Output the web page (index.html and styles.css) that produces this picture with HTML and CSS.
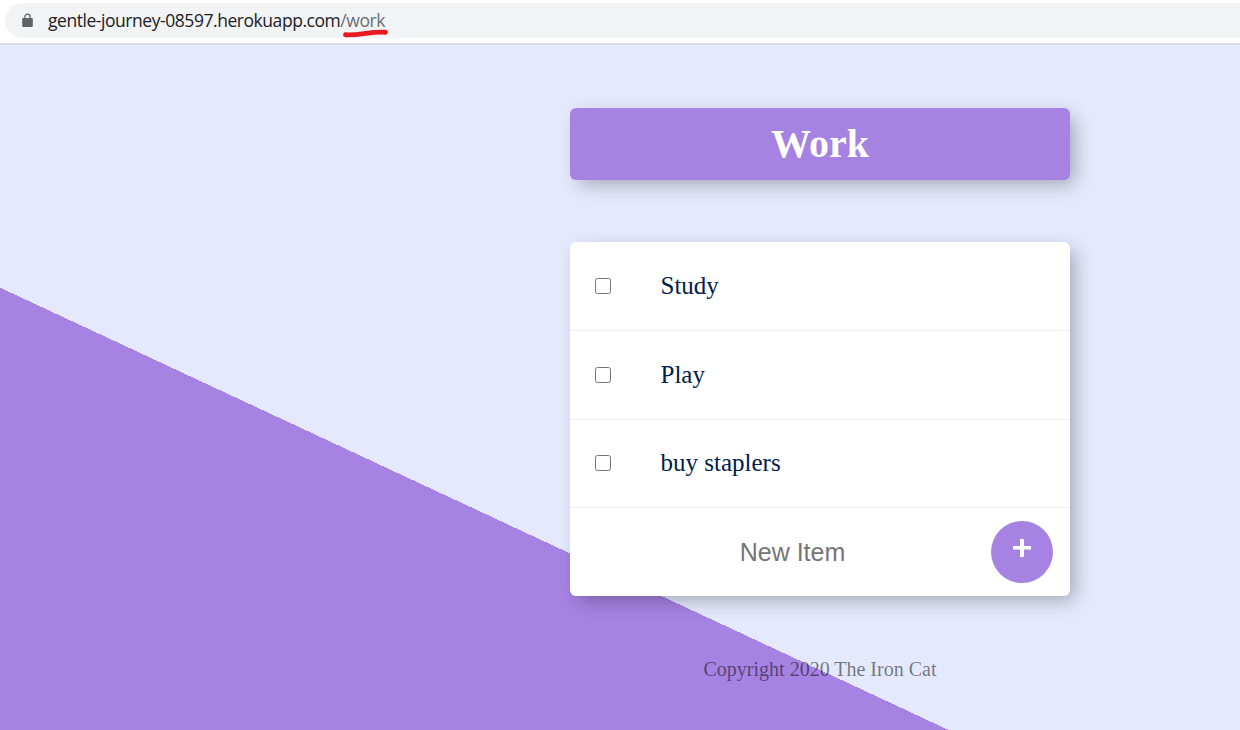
FILE: index.html
```html
<!DOCTYPE html>
<html lang="en">
<head>
<meta charset="utf-8">
<title>Work</title>
<link rel="stylesheet" href="styles.css">
</head>
<body>
<header class="browser-bar">
  <div class="address">
    <svg class="lock" width="12" height="15" viewBox="0 0 12 15"><path d="M2.9 6V3.8a2.6 2.6 0 0 1 5.2 0V6" fill="none" stroke="#5f6368" stroke-width="1.3"/><rect x="0.2" y="5" width="10.6" height="9" rx="1.2" fill="#5f6368"/></svg>
    <div class="url"><span>gentle-journey-08597.herokuapp.com</span><span class="path">/work<svg class="mark" width="48" height="10" viewBox="0 0 48 10"><path d="M3.5 6.8C18 7.6 27 3.4 43.5 4.2" fill="none" stroke="#e8191f" stroke-width="4.9" stroke-linecap="round" stroke-linejoin="round"/></svg></span></div>
  </div>
</header>
<main class="page">
  <div class="column">
    <div class="box heading"><h1>Work</h1></div>
    <div class="box list">
      <label class="item"><input class="check" type="checkbox"><span>Study</span></label>
      <label class="item"><input class="check" type="checkbox"><span>Play</span></label>
      <label class="item short"><input class="check" type="checkbox"><span>buy staplers</span></label>
      <form class="item short new-item">
        <input class="entry" type="text" placeholder="New Item">
        <button class="add" type="button" aria-label="Add"><svg width="18" height="18" viewBox="0 0 18 18"><path d="M7 0h4v7.1h7v3.4h-7V18H7v-7.5H0V7.1h7z" fill="#fff"/></svg></button>
      </form>
    </div>
    <footer class="footer">Copyright 2020 The Iron Cat</footer>
  </div>
</main>
</body>
</html>
```
FILE: styles.css
```css
* { box-sizing: border-box; }
body {
  margin: 0;
  height: 730px;
  overflow: hidden;
  display: flex;
  flex-direction: column;
  font-family: "Liberation Serif", "Times New Roman", serif;
}
.browser-bar {
  flex: none;
  height: 45px;
  padding: 3px 0 0 5px;
  background: #fff;
  border-bottom: 2px solid #d9dce0;
}
.address {
  display: flex;
  align-items: center;
  height: 35px;
  padding-left: 17px;
  border-radius: 18px 0 0 18px;
  background: #f1f3f4;
}
.lock { flex: none; margin-right: 14px; }
.url {
  font: 17.5px/35px "Open Sans", sans-serif;
  letter-spacing: -0.45px;
  color: #202124;
  white-space: nowrap;
}
.path { position: relative; color: #6b6f74; }
.path::first-letter { color: #202124; }
.mark { position: absolute; left: 2px; top: 20px; }
.page {
  flex: 1;
  min-height: 0;
  overflow: hidden;
  padding-left: 570px;
  background: linear-gradient(25deg, #a682e3 50%, #e4e9fd 50%) 0 0 / 1640px 1250px no-repeat;
}
.column { width: 500px; padding-top: 63px; }
.box {
  border-radius: 6px;
  box-shadow: 6.25px 6.25px 18.75px -3px rgba(0, 0, 0, 0.3);
}
.heading {
  height: 72px;
  display: flex;
  align-items: center;
  justify-content: center;
  background: #a682e3;
}
h1 { margin: 0; font-size: 40px; line-height: 46px; color: #fff; }
.list { margin-top: 62px; height: 354px; background: #fff; }
.item {
  display: flex;
  align-items: center;
  height: 89px;
  padding-left: 25px;
  border-bottom: 1px solid #f1f1f1;
  font-size: 25px;
  color: #00204a;
}
.short { height: 88px; padding-bottom: 1px; }
.check { width: 16px; height: 16px; margin: 0 49.5px 0 0; }
.new-item { padding: 0 17px 0 25px; border-bottom: 0; }
.entry {
  flex: 1;
  min-width: 0;
  height: 74px;
  margin-right: 1px;
  padding: 0;
  border: 0;
  outline: 0;
  background: transparent;
  font: 25px/30px "Liberation Sans", Arial, sans-serif;
  text-align: center;
}
.entry::placeholder { color: #757575; opacity: 1; }
.add {
  flex: none;
  width: 62px;
  height: 62px;
  padding: 0 0 8px;
  display: flex;
  align-items: center;
  justify-content: center;
  border: 0;
  border-radius: 50%;
  background: #a682e3;
}
.footer {
  margin-top: 62px;
  font-size: 20px;
  line-height: 23px;
  text-align: center;
  color: rgba(0, 0, 0, 0.5);
}
```
